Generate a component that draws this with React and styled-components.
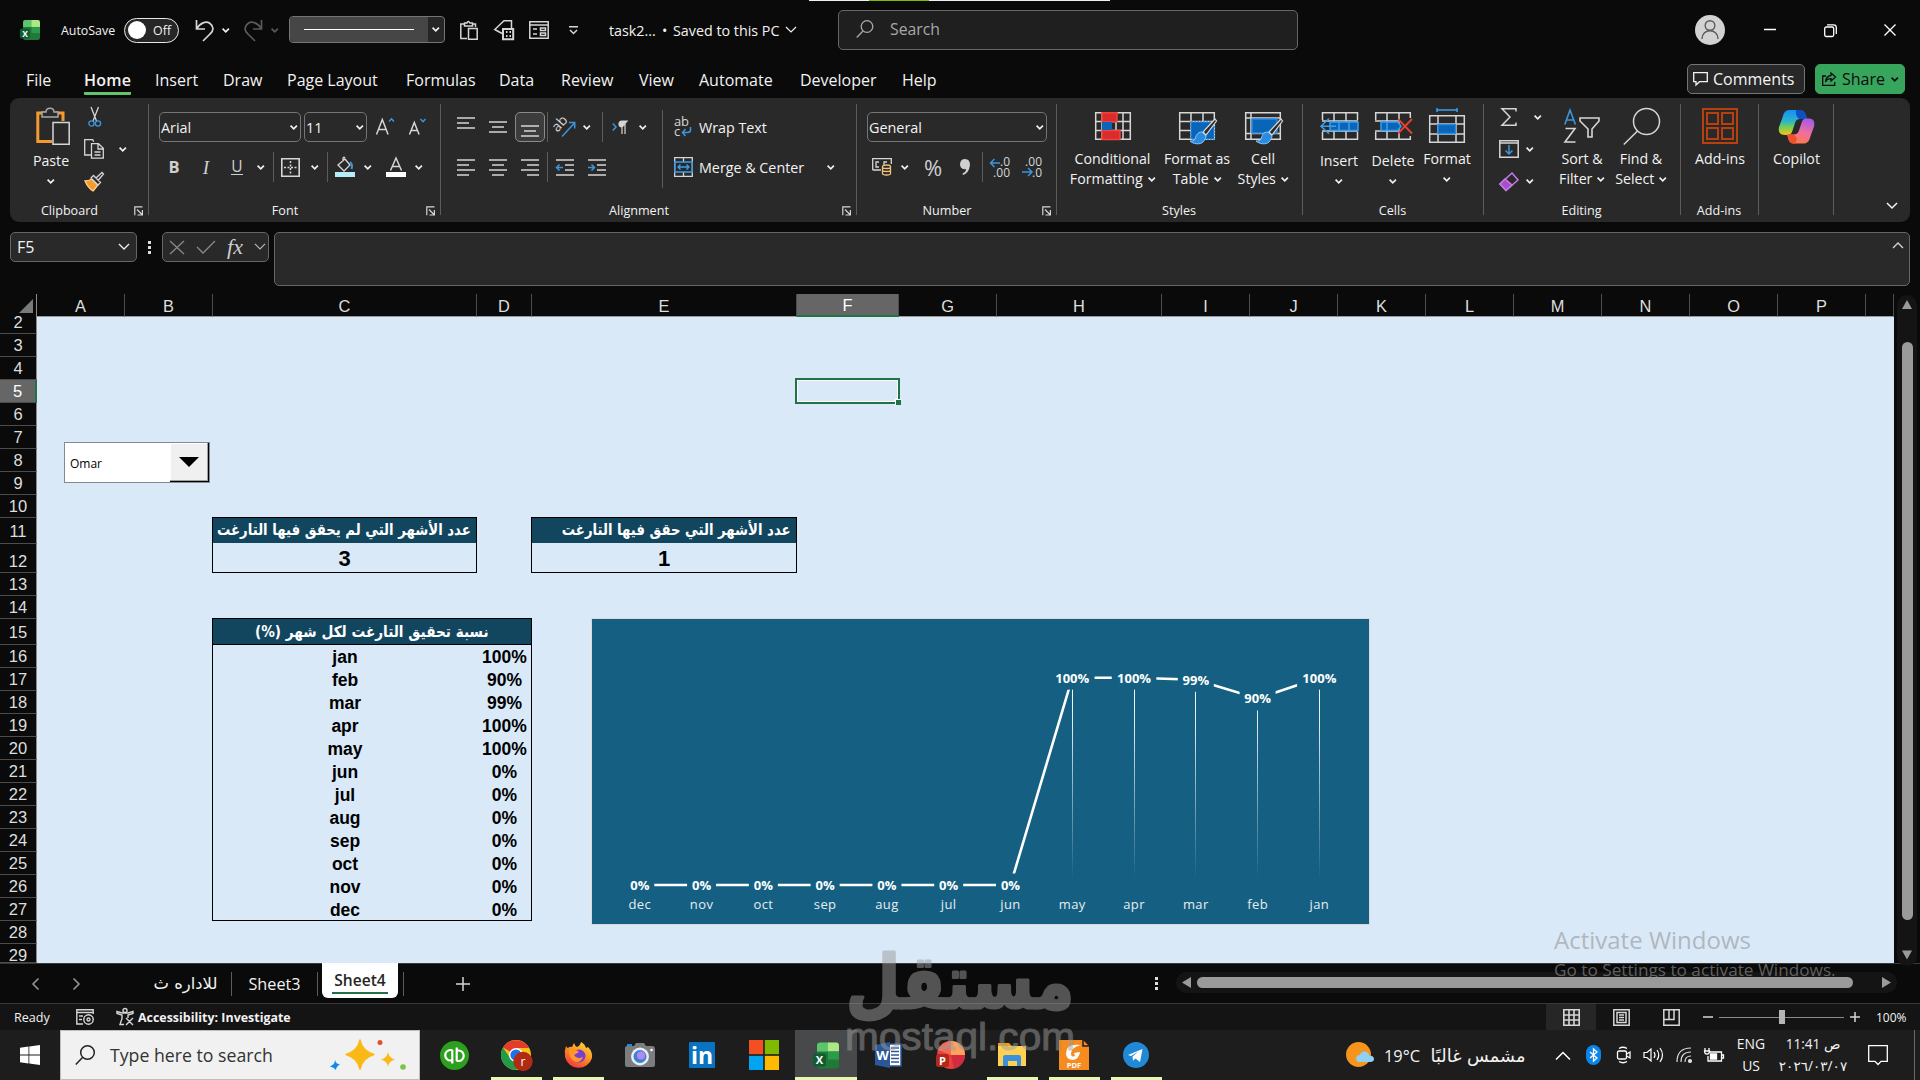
import React from 'react'
import styled, { createGlobalStyle, css } from 'styled-components'

const UI = '"Open Sans", "DejaVu Sans", sans-serif'
const CELL = '"Liberation Sans", "DejaVu Sans", Arial, sans-serif'

const GlobalStyle = createGlobalStyle`
  * {
    box-sizing: border-box;
  }
  body {
    margin: 0;
    background: #0a0a0a;
    overflow: hidden;
  }
  svg {
    display: block;
    flex: none;
    overflow: visible;
  }
`

const Page = styled.div`
  position: relative;
  display: flex;
  flex-direction: column;
  width: 1920px;
  height: 1080px;
  overflow: hidden;
  background: #0a0a0a;
  color: #f2f2f2;
  font-family: ${UI};
  font-size: 14.3px;
  white-space: nowrap;
`

/* shared bits */

const Slot = styled.div`
  flex: none;
  display: flex;
  align-items: center;
  justify-content: ${p => p.$start ? 'flex-start' : 'center'};
  width: ${p => p.$w}px;
  height: 100%;
`

const Rule = styled.i`
  flex: none;
  width: 1px;
  height: ${p => p.$h || 30}px;
  background: #5c5c5c;
`

const Svg = ({ w = 20, h = w, box, children, ...rest }) => (
  <svg width={w} height={h} viewBox={box || `0 0 ${w} ${h}`} fill="none" stroke="#d6d6d6" strokeWidth="1.5" {...rest}>
    {children}
  </svg>
)

const Chevron = ({ w = 7.5, color = '#f0f0f0', sw = 1.7 }) => (
  <Svg w={w} h={w * 0.6} box="0 0 10 6" stroke={color} strokeWidth={sw * 10 / w}><path d="M.8.8 5 5 9.2.8" /></Svg>
)

/* title bar */

const TitleBar = styled.header`
  display: flex;
  align-items: center;
  flex: none;
  height: 60px;
`

const Label = styled.span`
  flex: none;
  width: ${p => p.$w}px;
  font-size: ${p => p.$size || 14.3}px;
`

const Toggle = styled.div`
  display: flex;
  align-items: center;
  gap: 7px;
  flex: none;
  width: 55px;
  height: 25px;
  padding-left: 3px;
  border: 1px solid #e8e8e8;
  border-radius: 13px;
  background: #262626;
  font-size: 12.4px;
  &::before {
    content: '';
    width: 18px;
    height: 18px;
    border-radius: 50%;
    background: #fff;
  }
`

const LineStyleBox = styled.div`
  display: flex;
  flex: none;
  width: 156px;
  height: 27px;
  margin: -1px 11px 0 7px;
  border: 1px solid #757575;
  border-radius: 4px;
  background: #262626;
  overflow: hidden;
`

const LineStyle = styled.div`
  display: flex;
  align-items: center;
  justify-content: center;
  width: 138px;
  background: #464646;
  &::before {
    content: '';
    width: 110px;
    height: 1px;
    background: #fff;
  }
`

const SearchBox = styled.div`
  display: flex;
  align-items: center;
  flex: none;
  width: 460px;
  height: 40px;
  padding: 0 0 2px 17px;
  gap: 16px;
  border: 1px solid #666;
  border-radius: 5px;
  background: #1f1f1f;
  color: #a8a8a8;
  font-size: 15.8px;
`

const Avatar = styled.div`
  display: flex;
  align-items: center;
  justify-content: center;
  flex: none;
  width: 30px;
  height: 30px;
  margin: 0 24px 0 397px;
  border-radius: 50%;
  background: #d2d2d2;
`

const TopStrip = styled.div`
  position: absolute;
  top: 0;
  left: 809px;
  width: 301px;
  height: 1px;
  background: linear-gradient(90deg, #f0f0f0 60px, #7fba00 60px 120px, #f0f0f0 120px);
`

/* ribbon tabs */

const TabRow = styled.nav`
  display: flex;
  flex: none;
  height: 38px;
  padding-left: 26px;
  font-size: 16px;
  line-height: 41px;
`

const Tab = styled.div`
  flex: none;
  width: ${p => p.$w}px;
  ${p => p.$active && css`
    font-weight: 600;
    & span {
      display: inline-block;
      height: 35px;
      border-bottom: 3px solid #62c46c;
      border-radius: 1px;
      letter-spacing: 0.2px;
    }
  `}
`

const ActionButton = styled.div`
  display: flex;
  align-items: center;
  flex: none;
  gap: ${p => p.$share ? 6 : 5}px;
  width: ${p => p.$share ? 90 : 118}px;
  height: 30px;
  margin: 4px 10px 0 0;
  padding-left: ${p => p.$share ? 6 : 5}px;
  border: 1px solid ${p => p.$share ? '#37a55c' : '#747474'};
  border-radius: 5px;
  background: ${p => p.$share ? '#37a55c' : '#282828'};
  color: ${p => p.$share ? '#0d0d0d' : '#f5f5f5'};
  line-height: 28px;
`

/* ribbon */

const Ribbon = styled.section`
  display: flex;
  flex: none;
  height: 124px;
  margin: 0 10px;
  border-radius: 9px;
  background: #292929;
`

const Group = styled.div`
  display: flex;
  flex-direction: column;
  flex: none;
  width: ${p => p.$w}px;
  height: 124px;
  padding-left: ${p => p.$pad || 0}px;
  background: linear-gradient(#5c5c5c, #5c5c5c) right 6px / 1px 111px no-repeat;
`

const GroupBody = styled.div`
  display: flex;
  flex: none;
  height: 102px;
`

const GroupFooter = styled.div`
  display: flex;
  align-items: center;
  height: 20px;
  margin-left: -${p => p.$pad || 0}px;
  padding-right: 2px;
  font-size: 12.6px;
  & > span {
    flex: 1;
    text-align: center;
  }
  & > svg {
    margin: 1px 4px 0 5px;
  }
`

const Rows = styled.div`
  display: flex;
  flex-direction: column;
  gap: ${p => p.$tight ? 0 : 10}px;
  padding-top: ${p => p.$tight ? 3 : 14}px;
`

const Row = styled.div`
  display: flex;
  align-items: center;
  height: ${p => p.$h || 30}px;
`

const BigButton = styled.div`
  display: flex;
  flex-direction: column;
  align-items: center;
  flex: none;
  width: ${p => p.$w}px;
  font-size: 14.2px;
  line-height: 20px;
  text-align: center;
  & small {
    display: flex;
    align-items: center;
    gap: 5px;
    height: 20px;
    font-size: 14.2px;
  }
`

const BigIcon = styled.div`
  display: flex;
  align-items: center;
  justify-content: center;
  height: 51px;
  padding-top: 5px;
  margin-bottom: ${p => p.$drop || 0}px;
`

const Select = styled.div`
  display: flex;
  align-items: center;
  justify-content: space-between;
  flex: none;
  width: ${p => p.$w}px;
  height: 30px;
  margin-right: 3px;
  padding: 0 3px 0 1px;
  border: 1px solid #757575;
  border-radius: 5px;
  font-size: 14.4px;
`

const Pressed = styled.div`
  display: flex;
  align-items: center;
  justify-content: center;
  width: 30px;
  height: 30px;
  padding-top: 8px;
  border: 1px solid #8a8a8a;
  border-radius: 5px;
  background: #3c3c3c;
`

const Glyph = styled.span`
  color: #cfcfcf;
  font-family: ${p => p.$serif ? '"Liberation Serif", serif' : UI};
  font-size: ${p => p.$size || 17}px;
  font-style: ${p => p.$italic ? 'italic' : 'normal'};
  font-weight: ${p => p.$bold ? 700 : 400};
  line-height: 1;
  ${p => p.$under && 'border-bottom: 1.5px solid #cfcfcf;'}
`

const Collapse = styled.div`
  display: flex;
  align-items: flex-end;
  justify-content: flex-end;
  flex: 1;
  padding: 0 12px 13px 0;
`

const Launcher = () => (
  <Svg w={9} h={10} strokeWidth="1.2"><path d="M8.5.8H.8v8.4M3 3.5l5 5M8.4 4v5H3.5" /></Svg>
)

const Lines = ({ w = [18, 12, 18, 12], align = 'left', h }) => (
  <Svg w={18} h={h || w.length * 5 - 3} strokeWidth="1.5">
    {w.map((len, i) => {
      const x = align === 'left' ? 0 : align === 'right' ? 18 - len : (18 - len) / 2
      return <path key={i} d={`M${x} ${1 + i * 5}h${len}`} />
    })}
  </Svg>
)

const Brush = () => (
  <g>
    <path d="M36 10 24 23l3 3L37.500 12Z" fill="#292929" stroke="#d6d6d6" strokeWidth="1.2" />
    <path d="M23 23c-5 0-6 4-7 7-1 2-3 2-5 2 3 3 10 4 13 1 2-2 3-5 3-6Z" fill="#2b8be0" stroke="#8cc8ff" strokeWidth="1" />
  </g>
)

const CondFormatIcon = () => (
  <Svg w={36} h={28}>
    <path d="M.7.7h34.600v26.600H.7ZM7 0v28M21 0v28M28 0v28M0 9.500h36M0 18.500h36" />
    <path d="M7 .7h15v9H7ZM7 18.500h18v9H7Z" fill="#d92c2c" stroke="#f0443a" />
    <path d="M7 10h10v8H7Z" fill="#0a64b8" stroke="none" />
  </Svg>
)

const FormatTableIcon = () => (
  <Svg w={37} h={34}>
    <path d="M.7 3.700h34.600v26.600H.7ZM12 3v28M24 3v28M0 12.500h36M0 21.500h36" />
    <path d="M12 13h23v17H12Z" fill="#0a64b8" stroke="#2b8be0" strokeDasharray="2 1" />
    <Brush />
  </Svg>
)

const CellStylesIcon = () => (
  <Svg w={37} h={34}>
    <path d="M.7 3.700h34.600v26.600H.7ZM6 3v28M0 9h36M0 24.500h36" />
    <path d="M7 10h25v14H7Z" fill="#0a64b8" stroke="#2b8be0" />
    <Brush />
  </Svg>
)

const InsertIcon = () => (
  <Svg w={39} h={28}>
    <path d="M2.500 8V.7h35V8M2.500 20v7.300h35V20M14 .7V28M26 .7V28M2 9h36M2 19h36" />
    <path d="M10 10h28v8.500H10Z" fill="#0a64b8" stroke="#3a9ff0" />
    <path d="M19 10v8M29 10v8M16 14.200H1M9 6.500 1 14.200l8 7.600" stroke="#3a9ff0" />
  </Svg>
)

const DeleteIcon = () => (
  <Svg w={37} h={28}>
    <path d="M.7 8V.7h34.600V6M.7 20v7.300h34.600V24M12 .7V28M24 .7V28M0 9h24M0 19h24" />
    <path d="M6 10h17l3 4.200-3 4.300H6Z" fill="#0a64b8" stroke="#3a9ff0" />
    <path d="M12 10v8" stroke="#3a9ff0" />
    <path d="m23 7 14 14.500M37 7 23 21.500" stroke="#e8402f" strokeWidth="1.8" />
  </Svg>
)

const FormatIcon = () => (
  <Svg w={36} h={36}>
    <path d="M.7 7.700h34.600v26.600H.7ZM9 7v28M27 7v28M0 16h36M0 26h36" />
    <path d="M9 16.500h17.500v9H9Z" fill="#0a64b8" stroke="#2b8be0" />
    <path d="M8 0v4M28 0v4M8 2h20" stroke="#3a9ff0" />
  </Svg>
)

const SortIcon = () => (
  <Svg w={36} h={34} strokeWidth="1.600">
    <path d="M.8 15.500 6 1l5.400 14.500M2.500 11h7" stroke="#3a96dd" />
    <path d="M1.500 19.500h9.500L1 33h10.500M16 9h19v3l-7 8v8h-4v-8l-8-8Z" />
  </Svg>
)

const FindIcon = () => (
  <Svg w={37} h={37}><circle cx="23.500" cy="13.500" r="13" /><path d="M14.500 23 .8 36.500" /></Svg>
)

const AddinsIcon = () => (
  <Svg w={36} h={36} stroke="#b8400f" strokeWidth="2">
    <path d="M1 1h34v34H1ZM5 5h11v11H5ZM20 5h11v11H20ZM5 20h11v11H5ZM20 20h11v11H20Z" />
  </Svg>
)

const CopilotIcon = () => (
  <Svg w={37} h={35} box="0 0 37 35" stroke="none">
    <defs>
      <linearGradient id="cpA" x1="0" y1="0" x2="0" y2="1">
        <stop offset="0" stopColor="#1a8df5" /><stop offset=".45" stopColor="#2bb5c9" />
        <stop offset=".7" stopColor="#7ccf4f" /><stop offset="1" stopColor="#f5c518" />
      </linearGradient>
      <linearGradient id="cpB" x1=".6" y1="0" x2=".3" y2="1">
        <stop offset="0" stopColor="#a85be8" /><stop offset=".5" stopColor="#ee6fa0" /><stop offset="1" stopColor="#ff7a45" />
      </linearGradient>
    </defs>
    <path d="M20 1c5 0 7 2 8 6l1 3h-7c-3 0-4 1-5 4l-3 9c-1 2-2 3-4 3H7c-5 0-7-3-6-8L5 7c1-4 3-6 7-6Z" fill="url(#cpA)" />
    <path d="M18 1h3c4 0 6 2 7 6l1 3h-6c-3 0-4-2-5-5Z" fill="#0b50c4" />
    <path d="M17 34.500c-5 0-6-2-7-6l-1-3h6c3 0 5-1 6-4l3-9c1-2 2-3 4-3h3c5 0 6 4 5 8l-4 11c-1 4-3 6-7 6Z" fill="url(#cpB)" />
    <path d="M17 34.500c-5 0-6-2-7-6l-1-3h5c3 0 4 2 5 5Z" fill="#f0502a" />
  </Svg>
)

const PasteIcon = () => (
  <Svg w={30} h={38}>
    <path d="M10 6H1.800v28.500H16M20 6h7v8" stroke="#f59a2f" strokeWidth="3" />
    <path d="M6 10V5h4c0-5 8-5 8 0h4v5Z" fill="#292929" stroke="#a9a9a9" />
    <path d="M17 15.500h16.200v21.700H17Z" fill="#292929" />
  </Svg>
)

const CutIcon = () => (
  <Svg w={13} h={20} strokeWidth="1.300">
    <path d="m3 0 5.500 14M10.500 0 5 14" />
    <circle cx="3.500" cy="16.500" r="2.600" stroke="#3a96dd" /><circle cx="10" cy="16.500" r="2.600" stroke="#3a96dd" />
  </Svg>
)

const CopyIcon = () => (
  <Svg w={20} h={20} strokeWidth="1.300">
    <path d="M7 16H.7V.7h8l1 2M7.500 4.700h7l4.800 4.500v10H7.500ZM14 5v5h5M10.500 13h6M10.500 16h6" />
  </Svg>
)

const PainterIcon = () => (
  <Svg w={20} h={19} strokeWidth="1.300">
    <path d="M1 9c3 0 5-1 7-2l6 6c-2 2-3 4-5 6Q4 16 1 9Z" fill="#f59a2f" stroke="#ffd08a" />
    <path d="m7 6 2.500-2.500 7 7L14 13ZM12 6l6-5.500L19.500 2 14 8.500" fill="#292929" />
  </Svg>
)

const MergeIcon = () => (
  <Svg w={19} h={20} strokeWidth="1.300">
    <path d="M.7.7h17.600v18.600H.7ZM9.500 0v5M9.500 15v5" />
    <path d="M.7 5h17.600v10H.7ZM4 10h11M6.500 7.500 4 10l2.500 2.500M12.500 7.500 15 10l-2.500 2.500" stroke="#3a9ff0" />
  </Svg>
)

const WrapIcon = () => (
  <Svg w={18} h={20}>
    <text x="0" y="8.500" fontSize="13" textLength="15" fill="#d6d6d6" stroke="none" fontFamily={UI}>ab</text>
    <text x="0" y="19" fontSize="13" fill="#d6d6d6" stroke="none" fontFamily={UI}>c</text>
    <path d="M16.500 10v3q0 2.500-3 2.500H8.500M11.500 12l-3 3.500 3 3.500" stroke="#3a96dd" />
  </Svg>
)

const OrientIcon = () => (
  <Svg w={20} h={20}>
    <text x="-1" y="12" fontSize="14" fill="#d6d6d6" stroke="none" fontFamily={UI} transform="rotate(-48 5 10)">ab</text>
    <path d="M7 19.500 19.500 6M14 5.500h5.700v6" stroke="#3a96dd" />
  </Svg>
)

const AccountingIcon = () => (
  <Svg w={20} h={18} strokeWidth="1.300">
    <path d="M.7 12V.7h18.600V6M.7 12H9M7 4H4v5h3M12 9V4h3" />
    <path d="M10.500 8.500c0-2 8-2 8 0v7c0 2-8 2-8 0ZM10.500 9c0 2 8 2 8 0M10.500 12c0 2 8 2 8 0" fill="#292929" stroke="#f2c27a" />
  </Svg>
)

const DecimalIcon = ({ more }) => (
  <Svg w={20} h={20}>
    <g fontSize="12" fill="#d6d6d6" stroke="none" fontFamily={UI}>
      <text x={more ? 10 : 3} y="8.800" textLength={more ? 10 : 17}>{more ? '.0' : '.00'}</text>
      <text x={more ? 3 : 10} y="19.500" textLength={more ? 17 : 10}>{more ? '.00' : '.0'}</text>
    </g>
    <path d={more ? 'M10 6H.5M4.500 2 .5 6l4 4' : 'M0 15h10M6 11l4 4-4 4'} stroke="#3a96dd" />
  </Svg>
)

const IndentIcon = ({ out }) => (
  <Svg w={18} h={17}>
    <path d="M0 1h18M9 6h9M9 11h9M0 16h18" />
    <path d={out ? 'M7 8.500H.5M3.500 5.500l-3 3 3 3' : 'M0 8.500h6.500M3.500 5.500l3 3-3 3'} stroke="#3a96dd" />
  </Svg>
)

const BordersIcon = () => (
  <Svg w={19} h={19}><path d="M.8.8h17.400v17.400H.8Z" strokeWidth="1.6" /><path d="M9.500 3v13M3 9.500h13" strokeDasharray="2 1.500" /></Svg>
)

const BucketIcon = () => (
  <Svg w={20} h={20} strokeWidth="1.300">
    <path d="m3 8 7-6 5 6-6 6ZM8 5V1q1-1.500 2 0" />
    <path d="M15 5q3 2 1.500 7" stroke="#3a96dd" strokeWidth="2" />
    <path d="M0 15h20v5H0Z" fill="#b5ecfb" stroke="none" />
  </Svg>
)

const FontColorIcon = () => (
  <Svg w={20} h={20}><path d="M4.500 13.500 10 1l5.500 12.500M6.500 9.500h7" /><path d="M0 15h20v5H0Z" fill="#fff" stroke="none" /></Svg>
)

const FontSizeIcon = ({ up }) => (
  <Svg w={18} h={18}>
    {up
      ? <path d="M.5 16.500 6.300 1.500l5.800 15M2.500 11.500h7.600" />
      : <path d="M.5 16.500 5.300 4.500l4.800 12M2 12.500h6.500" />}
    <path d={up ? 'm13 3.500 2.500-2.700L18 3.500' : 'm11.500 1 2.500 2.700L16.500 1'} stroke="#3a96dd" />
  </Svg>
)

/* formula bar */

const FormulaBar = styled.section`
  display: flex;
  flex: none;
  height: 72px;
  padding: 10px 0 0 10px;
`

const Field = styled.div`
  display: flex;
  align-items: center;
  justify-content: space-between;
  flex: none;
  width: ${p => p.$w}px;
  height: ${p => p.$h || 30}px;
  padding: 0 ${p => p.$r || 6}px 0 6px;
  border: 1px solid #666;
  border-radius: 5px;
  background: #292929;
  font-size: 16px;
`

const FormulaInput = styled(Field)`
  align-items: flex-start;
  justify-content: flex-end;
  margin-left: 5px;
  padding: 9px 5px;
`

const Dots = styled.div`
  flex: none;
  width: 25px;
  height: ${p => p.$h || 30}px;
  background: linear-gradient(#ddd 3px, transparent 3px 5px, #ddd 5px 8px, transparent 8px 10px, #ddd 10px) center / 3px 13px no-repeat;
`

/* worksheet */

const SheetArea = styled.main`
  position: relative;
  display: flex;
  flex: none;
  height: 669px;
`

const rowHeights = [17, 23, 23, 23, 23, 23, 23, 23, 23, 26, 29, 23, 23, 26, ...Array(12).fill(23), 23, 19]

const Sheet = styled.div`
  display: grid;
  flex: none;
  width: 1894px;
  grid-template-columns: 37px 88px 88px 264px 55px 265px 102px 98px 165px repeat(8, 88px) 28px;
  grid-template-rows: 23px ${rowHeights.map(h => h + 'px').join(' ')};
  background: linear-gradient(#d9e9f8, #d9e9f8) 37px 23px no-repeat;
  font-family: ${CELL};
`

const Corner = styled.div`
  grid-area: 1 / 1;
  display: flex;
  align-items: flex-end;
  justify-content: flex-end;
  padding: 0 3px 4px 0;
  border-right: 1px solid #8a8a8a;
`

const ColHead = styled.div`
  grid-row: 1;
  display: flex;
  align-items: center;
  justify-content: center;
  padding-top: 2px;
  border-right: 1px solid #4c4c4c;
  border-bottom: 1px solid #9a9a9a;
  font-size: 16.4px;
  color: #dedede;
  ${p => p.$active && css`
    background: #666;
    border-bottom: 2px solid #217346;
    color: #fff;
  `}
`

const RowHead = styled.div`
  grid-column: 1;
  display: flex;
  align-items: ${p => p.$edge || 'center'};
  justify-content: center;
  border-right: 1px solid #8a8a8a;
  border-bottom: 1px solid #4c4c4c;
  font-size: 16.5px;
  line-height: 22px;
  color: #dedede;
  ${p => p.$active && css`
    background: #666;
    border-right: 2px solid #217346;
    color: #fff;
  `}
`

const Selection = styled.div`
  grid-area: 5 / 7;
  position: relative;
  margin: -2px -1px -1px -2px;
  border: 2px solid #217346;
  box-shadow: inset 0 0 0 1px #fff;
  &::after {
    content: '';
    position: absolute;
    right: -3px;
    bottom: -3px;
    width: 5px;
    height: 5px;
    border: solid #fff;
    border-width: 1px 0 0 1px;
    background: #217346;
  }
`

const Counter = styled.div`
  grid-row: 11 / span 2;
  grid-column: ${p => p.$col};
  display: flex;
  flex-direction: column;
  margin: -1px 0 0 -1px;
  border: 1px solid #000;
  color: #000;
  font-size: 22px;
  font-weight: 700;
  line-height: 32px;
  text-align: center;
`

const ArabicHead = styled.div`
  flex: none;
  height: ${p => p.$h}px;
  padding: 0 5px;
  background: #12465f;
  color: #fff;
  font-family: "DejaVu Sans", sans-serif;
  font-size: 15.5px;
  font-weight: 700;
  line-height: ${p => p.$h}px;
  text-align: ${p => p.$center ? 'center' : 'right'};
  direction: rtl;
  & span {
    display: inline-block;
    transform: scaleX(${p => p.$center ? 0.88 : 0.855});
    transform-origin: ${p => p.$center ? 'center' : 'right'};
  }
`

const MonthTable = styled.div`
  grid-row: 15 / span 13;
  grid-column: 4 / span 2;
  margin: -1px 0 0 -1px;
  border: 1px solid #000;
  color: #000;
  font-size: 17.5px;
  font-weight: 700;
  & > ${ArabicHead} {
    border-bottom: 1px solid #000;
  }
`

const MonthRow = styled.div`
  display: grid;
  grid-template-columns: 264px 55px;
  height: 23px;
  line-height: 25px;
  text-align: center;
`

const ComboBox = styled.div`
  position: absolute;
  left: 64px;
  top: 148px;
  display: flex;
  align-items: center;
  justify-content: space-between;
  width: 146px;
  height: 41px;
  padding-left: 5px;
  border: 1px solid #848a92;
  background: #fff;
  color: #000;
  font-size: 12px;
  & > span {
    padding-top: 2px;
  }
`

const ComboArrow = styled.div`
  display: flex;
  align-items: center;
  justify-content: center;
  width: 39px;
  height: 39px;
  border: solid #000;
  border-width: 0 1px 1px 0;
  background: #f0f0f0;
  box-shadow: inset -1px -1px #a0a0a0, inset 1px 1px #fff;
  &::before {
    content: '';
    border: 10px solid transparent;
    border-top-color: #000;
    border-bottom: 0;
  }
`

const ChartFrame = styled.div`
  position: absolute;
  left: 591px;
  top: 324px;
`

const months = [
  ['jan', 100], ['feb', 90], ['mar', 99], ['apr', 100], ['may', 100], ['jun', 0],
  ['jul', 0], ['aug', 0], ['sep', 0], ['oct', 0], ['nov', 0], ['dec', 0],
]

const Chart = () => {
  const pts = [...months].reverse().map(([name, v], i) => ({
    name,
    v,
    x: 48.8 + i * 61.78,
    y: 267 - v * 2.073,
    half: v === 100 ? 22.3 : v ? 18 : 14.5,
  }))
  return (
    <ChartFrame>
      <svg width="779" height="307" fontFamily={UI} textAnchor="middle">
        <defs>
          <linearGradient id="drop" gradientUnits="userSpaceOnUse" x1="0" y1="60" x2="0" y2="262">
            <stop offset="0" stopColor="#fff" />
            <stop offset=".25" stopColor="#fff" stopOpacity=".85" />
            <stop offset="1" stopColor="#fff" stopOpacity="0" />
          </linearGradient>
        </defs>
        <rect x=".5" y=".5" width="778" height="306" fill="#156082" stroke="#d9d9d9" />
        {pts.filter(p => p.v).map(p => (
          <rect key={p.name} x={Math.floor(p.x)} y={p.y} width="1" height={262 - p.y} fill="url(#drop)" />
        ))}
        <polyline points={pts.map(p => `${p.x},${p.y}`).join(' ')} fill="none" stroke="#fff" strokeWidth="2.6" />
        {pts.map(p => (
          <g key={p.name} fill="#fff">
            <rect x={p.x - p.half} y={p.y - 11.5} width={p.half * 2} height="23.500" fill="#156082" />
            <text x={p.x} y={p.y + 5} fontSize="13" fontWeight="700">{p.v}%</text>
            <text x={p.x} y="290.500" fontSize="13" letterSpacing=".4" fill="#e6edf1">{p.name}</text>
          </g>
        ))}
      </svg>
    </ChartFrame>
  )
}

const VScroll = styled.div`
  display: flex;
  flex-direction: column;
  align-items: center;
  width: 20px;
  height: 671px;
  margin: 1px 0 0 3px;
  padding: 5px 0 6px;
  border-radius: 10px;
  background: #141414;
`

const VThumb = styled.div`
  width: 11px;
  height: 578px;
  margin: 32px 0 auto;
  border-radius: 6px;
  background: #9a9a9a;
`

/* sheet tabs + status bar */

const SheetTabs = styled.section`
  display: flex;
  flex: none;
  height: 40px;
  border-top: 1px solid #3a3a3a;
  background: #0a0a0a;
  font-size: 16.2px;
`

const ActiveSheet = styled.div`
  flex: none;
  width: 76px;
  height: 35px;
  margin: -1px 5px 0 4px;
  padding: 7px 10px 0;
  border-radius: 0 0 6px 6px;
  background: #fff;
  color: #262626;
  font-size: 15.6px;
  font-weight: 600;
  line-height: 23px;
  text-align: center;
  & span {
    display: block;
    border-bottom: 2px solid #217346;
    margin: -1px 0;
  }
`

const ArabicTab = styled.span`
  font-family: "DejaVu Sans", sans-serif;
  font-size: ${p => p.$size || 16.4}px;
`

const HScroll = styled.div`
  display: flex;
  align-items: center;
  flex: none;
  width: 721px;
  height: 21px;
  margin: 8px 0 0 7px;
  padding: 0 6px;
  border-radius: 10px;
  background: #141414;
`

const HThumb = styled.div`
  width: 656px;
  height: 11px;
  margin: 0 auto 0 6px;
  border-radius: 6px;
  background: #9a9a9a;
`

const StatusBar = styled.footer`
  display: flex;
  align-items: center;
  flex: none;
  height: 27px;
  padding-left: 14px;
  border-top: 1px solid #3a3a3a;
  background: #141414;
  font-size: 12.4px;
  & b {
    width: 1256px;
    font-size: 12.4px;
    letter-spacing: 0.02px;
  }
`

const ViewButton = styled(Slot)`
  height: 27px;
  background: ${p => p.$active ? '#262626' : 'none'};
`

const ZoomTrack = styled.div`
  display: flex;
  align-items: center;
  justify-content: center;
  width: 125px;
  height: 14px;
  background: linear-gradient(#8a8a8a, #8a8a8a) center / 100% 1px no-repeat;
  &::before {
    content: '';
    width: 6px;
    height: 14px;
    background: #b5b5b5;
  }
`

/* taskbar */

const Taskbar = styled.footer`
  display: flex;
  flex: none;
  height: 50px;
  background: #1d1d1d;
`

const TaskSearch = styled.div`
  display: flex;
  align-items: center;
  flex: none;
  width: 360px;
  margin-right: 3px;
  padding: 0 13px 0 14px;
  gap: 15px;
  background: #f1f1f1;
  border: 1px solid #bdbdbd;
  color: #333;
  font-size: 17.7px;
  & > svg:last-child {
    margin-left: auto;
  }
`

const AppButton = styled.div`
  display: flex;
  align-items: center;
  justify-content: center;
  flex: none;
  width: 62px;
  height: 50px;
  ${p => p.$open && css`
    background: linear-gradient(#e6f7b4, #e6f7b4) bottom / 51px 3px no-repeat;
  `}
  ${p => p.$active && css`
    background: linear-gradient(#e6f7b4, #e6f7b4) bottom / 100% 3px no-repeat #48494b;
  `}
`

const TrayText = styled.div`
  flex: none;
  width: ${p => p.$w}px;
  padding-top: 3px;
  font-size: ${p => p.$size || 13.6}px;
  line-height: 22px;
  text-align: center;
`

const ShowDesktop = styled.i`
  width: 1px;
  margin-left: auto;
  margin-right: 5px;
  background: #6a6a6a;
`

const ExcelLogo = ({ w = 20, h = w }) => (
  <Svg w={w} h={h} box="0 0 26 26" stroke="none">
    <rect x="4" width="22" height="26" rx="3" fill="#1f7a3a" />
    <path d="M7 0h9v9H4V3q0-3 3-3Z" fill="#5cc46a" />
    <path d="M15 0h8q3 0 3 3v6H15Z" fill="#aee884" />
    <path d="M15 9h11v8H15Z" fill="#2a9b46" />
    <rect y="11" width="13" height="13" rx="2.500" fill="#115c31" />
    <text x="6.500" y="21.500" fontSize="11" fontWeight="700" fill="#fff" textAnchor="middle" fontFamily={UI}>X</text>
  </Svg>
)

const taskApps = [
  { icon: (
    <Svg w={29} stroke="none"><circle cx="14.500" cy="14.500" r="14.500" fill="#2ca01c" />
      <path d="M12.500 9h-2a5 5 0 0 0 0 10.500h.8M16.500 20h2a5 5 0 0 0 0-10.500h-.8M12.300 9v13.500M16.700 6.500V20" stroke="#fff" strokeWidth="2.200" />
    </Svg>
  ) },
  { open: true, icon: (
    <Svg w={30} stroke="none">
      <circle cx="15" cy="15" r="15" fill="#fbc116" />
      <path d="M15 15 2 7.500A15 15 0 0 1 28 8H15Z" fill="#e33b2e" />
      <path d="M2 7.500A15 15 0 0 0 15 30l6-11-6-1-6.500-1Z" fill="#229a49" />
      <circle cx="15" cy="15" r="7" fill="#fff" /><circle cx="15" cy="15" r="5.600" fill="#1a73e8" />
      <circle cx="22" cy="21.500" r="9.700" fill="#b02a14" />
      <text x="22" y="25.500" fontSize="12" fill="#fff" textAnchor="middle" fontFamily={UI}>r</text>
    </Svg>
  ) },
  { open: true, icon: (
    <Svg w={29} stroke="none">
      <defs><linearGradient id="ff" x1=".8" y1="0" x2=".2" y2="1"><stop offset="0" stopColor="#ffd83d" /><stop offset=".5" stopColor="#ff8a1f" /><stop offset="1" stopColor="#ee2d4a" /></linearGradient></defs>
      <path d="M2 5q1 2 2 2 2-2 4-1l2-4q1 3 3 4 3-1 4-5 4 2 5 6l2-1q5 5 4 11A14 14 0 0 1 1 16Q0 10 2 5Z" fill="url(#ff)" />
      <circle cx="15" cy="15" r="6.500" fill="#7a3fd0" />
      <path d="M5 9q6-2 10 2l-5 3q3 5 9 2-3 7-9 4-5-3-5-11Z" fill="#ff9a2a" />
    </Svg>
  ) },
  { icon: (
    <Svg w={30} h={25} stroke="none">
      <path d="M9 3 11 0h8l2 3h6q3 0 3 3v16q0 2-2 2H2q-2 0-2-2V5q0-2 2-2Z" fill="#7b7d80" />
      <path d="M2 3V1h5v2Z" fill="#1b8be0" /><circle cx="15" cy="13.500" r="9" fill="#e9eef2" />
      <circle cx="15" cy="13.500" r="6.500" fill="#3f7fd6" /><circle cx="16" cy="12.500" r="4" fill="#b18cf0" /><circle cx="26.500" cy="7" r="1.300" fill="#fff" />
    </Svg>
  ) },
  { icon: (
    <Svg w={26} stroke="none"><rect width="26" height="26" rx="1" fill="#0a72c2" />
      <text x="13" y="22" fontSize="23" fontWeight="700" fill="#fff" textAnchor="middle" fontFamily={UI}>in</text>
    </Svg>
  ) },
  { icon: (
    <Svg w={30} stroke="none"><path d="M0 0h14.200v14.200H0Z" fill="#f25022" /><path d="M15.800 0H30v14.200H15.800Z" fill="#7fba00" /><path d="M0 15.800h14.200V30H0Z" fill="#00a4ef" /><path d="M15.800 15.800H30V30H15.800Z" fill="#ffb900" /></Svg>
  ) },
  { active: true, icon: <ExcelLogo w={26} h={27} /> },
  { icon: (
    <Svg w={27} h={26} stroke="none"><path d="M13 2h13v22H13Z" fill="#fff" stroke="#2b5797" />
      <path d="M16 6h8M16 9.500h8M16 13h8M16 16.500h8M16 20h8" stroke="#2b5797" strokeWidth="1.500" />
      <path d="M0 3 15 0v26L0 23Z" fill="#2b5797" />
      <text x="7.500" y="18" fontSize="13" fontWeight="700" fill="#fff" textAnchor="middle" fontFamily={UI}>W</text>
    </Svg>
  ) },
  { icon: (
    <Svg w={29} h={28} stroke="none"><circle cx="15" cy="14" r="14" fill="#e8413b" />
      <path d="M15 0a14 14 0 0 1 14 14H15Z" fill="#ffa35c" /><path d="M15 0a14 14 0 0 0-13 9l13 5Z" fill="#f46b5a" />
      <path d="m15 14 14 0a14 14 0 0 1-11 13.600Z" fill="#d12b3f" />
      <rect y="13" width="13" height="13" rx="2.500" fill="#b3281a" />
      <text x="6.500" y="23.500" fontSize="11" fontWeight="700" fill="#fff" textAnchor="middle" fontFamily={UI}>P</text>
    </Svg>
  ) },
  { open: true, icon: (
    <Svg w={28} h={24} stroke="none"><path d="M0 0h11l3 3h-3v3H0Z" fill="#e8a013" /><path d="M0 3h28v20H0Z" fill="#ffd152" />
      <path d="M5 23v-9q0-2 2-2h14q2 0 2 2v9h-4v-5h-9v5Z" fill="#3a90dc" />
    </Svg>
  ) },
  { open: true, icon: (
    <Svg w={30} stroke="none"><path d="M0 0h24l6 6v24H0Z" fill="#f68b1f" /><path d="M24 0v6h6" stroke="#1d1d1d" />
      <path d="M22 5q-15-2-15 8 0 7 7 7 6-1 7-8l-6 1 1 3q-4 2-4-3 1-6 10-8Z" fill="#fff" />
      <text x="15" y="28" fontSize="7.500" fontWeight="700" fill="#fff" textAnchor="middle" fontFamily={UI}>PDF</text>
    </Svg>
  ) },
  { open: true, icon: (
    <Svg w={26} stroke="none"><circle cx="13" cy="13" r="13" fill="#2089d8" /><path d="m5 13 14.500-6-2.500 13-4.500-3.500-2.500 2.300-.5-4.300 6-5-7.500 4.500Z" fill="#fff" /></Svg>
  ) },
]

/* overlays */

const ActivateNotice = styled.div`
  position: absolute;
  left: 1554px;
  top: 923px;
  color: rgba(150, 150, 150, 0.62);
  font-size: 24px;
  line-height: 33px;
  & p {
    margin: 0;
    font-size: 17.2px;
    line-height: 27px;
  }
`

const Watermark = styled.div`
  position: absolute;
  left: 845px;
  top: 945px;
  opacity: 0.5;
`

const tabs = [
  ['File', 58], ['Home', 71], ['Insert', 68], ['Draw', 64], ['Page Layout', 119], ['Formulas', 93],
  ['Data', 62], ['Review', 78], ['View', 60], ['Automate', 101], ['Developer', 102], ['Help', 785],
]

const RibbonGroup = ({ w, pad, label, launcher, children }) => (
  <Group $w={w} $pad={pad}>
    <GroupBody>{children}</GroupBody>
    <GroupFooter $pad={pad}>
      <span>{label}</span>
      {launcher && <Launcher />}
    </GroupFooter>
  </Group>
)

const Big = ({ w, icon, top, bottom, chevron, drop }) => (
  <BigButton $w={w}>
    <BigIcon $drop={drop}>{icon}</BigIcon>
    {top}
    {(bottom || chevron) && <small>{bottom}{chevron && <Chevron />}</small>}
  </BigButton>
)

const App = () => {
  return (
    <Page>
      <GlobalStyle />
      <TitleBar>
        <Slot $w={59}><ExcelLogo /></Slot>
        <Slot $w={2} />
        <Label $w={63} $size={12.4}>AutoSave</Label>
        <Toggle>Off</Toggle>
        <Slot $w={15} />
        <Slot $w={20}><Svg w={19} h={21} strokeWidth="1.7"><path d="M1.500 0v9h8.500M1.500 9C5 3 11 .5 15 3.500s4 7 0 10.500l-7 7" /></Svg></Slot>
        <Slot $w={24}><Chevron /></Slot>
        <Slot $w={30}><Svg w={19} h={21} stroke="#5a5a5a" strokeWidth="1.7"><path d="M17.500 0v9H9M17.500 9C14 3 8 .5 4 3.500s-4 7 0 10.500l7 7" /></Svg></Slot>
        <Slot $w={14}><Chevron color="#5a5a5a" /></Slot>
        <LineStyleBox>
          <LineStyle />
          <Slot $w={16}><Chevron /></Slot>
        </LineStyleBox>
        <Slot $w={26}><Svg w={18} h={20}><path d="M7 18.500H.8V4H5M12 4h3.500v3M4.500 6V3h2.500q1-3 3 0h2.500v3ZM8.500 8.500h8.700v10.700H8.500Z" /></Svg></Slot>
        <Slot $w={44}><Svg w={20} h={20}><path d="M8 13.500.8 9.500 10 .8h7.500V8" /><path d="M9 9h10.200v10.200H9ZM12 12h1.500M15.500 12H17M12 16h1.500M15.500 16H17" strokeWidth="2" /></Svg></Slot>
        <Slot $w={26}><Svg w={20} h={18}><path d="M.8.8h18.400v16.400H.8ZM0 4h20M4 8h4M4 13h4M11.500 7h5v2.500h-5ZM11.500 12h5v2.500h-5Z" /></Svg></Slot>
        <Slot $w={43}><Svg w={9} h={9}><path d="M0 .8h9M1 4l3.500 3.500L8 4" /></Svg></Slot>
        <Slot $w={14} />
        <Label $w={53}>task2...</Label>
        <Label $w={11}>•</Label>
        <Label $w={112}>Saved to this PC</Label>
        <Slot $w={53} $start><Chevron w={12} sw={1.2} /></Slot>
        <SearchBox>
          <Svg w={18} h={18} stroke="#a8a8a8" strokeWidth="1.3"><circle cx="11" cy="6.500" r="5.800" /><path d="M7 11 .8 17.500" /></Svg>
          Search
        </SearchBox>
        <Avatar>
          <Svg w={18} h={20} stroke="#5a5a5a" strokeWidth="1.4"><circle cx="9" cy="5.500" r="4.800" /><path d="M1 19c0-11 16-11 16 0" /></Svg>
        </Avatar>
        <Slot $w={42}><Svg w={12} h={2} stroke="#fff"><path d="M0 .5h12" /></Svg></Slot>
        <Slot $w={78}><Svg w={13} h={13} stroke="#fff" strokeWidth="1.3"><rect x=".7" y="3" width="9" height="9.500" rx="1.500" /><path d="M3 .8h6.500q2.800 0 2.800 2.800v6.500" /></Svg></Slot>
        <Slot $w={42}><Svg w={12} h={12} stroke="#fff" strokeWidth="1.4"><path d="m.5.5 11 11M11.500.5l-11 11" /></Svg></Slot>
      </TitleBar>
      <TopStrip />

      <TabRow>
        {tabs.map(([name, w]) => <Tab key={name} $w={w} $active={name === 'Home'}><span>{name}</span></Tab>)}
        <ActionButton>
          <Svg w={15} h={14} stroke="#f5f5f5" strokeWidth="1.3"><path d="M.7.7h13.600v9H6.500L3 13V9.700H.7Z" /></Svg>
          Comments
        </ActionButton>
        <ActionButton $share>
          <Svg w={14} h={14} stroke="#0d0d0d" strokeWidth="1.3"><path d="M4 4H.7v9.300h12V10M9 1l4.500 4L9 9V6.700Q5 6.500 3.500 10 4 4 9 3.500Z" /></Svg>
          Share
          <Chevron color="#0d0d0d" />
        </ActionButton>
      </TabRow>

      <Ribbon>
        <RibbonGroup w={139} pad={14} label="Clipboard" launcher>
          <Big w={54} drop={2} icon={<PasteIcon />} top="Paste" chevron />
          <Rows $tight>
            <Row $h={32}><Slot $w={32}><CutIcon /></Slot></Row>
            <Row $h={32}><Slot $w={32}><CopyIcon /></Slot><Slot $w={26}><Chevron /></Slot></Row>
            <Row $h={32}><Slot $w={32}><PainterIcon /></Slot></Row>
          </Rows>
        </RibbonGroup>

        <RibbonGroup w={292} pad={10} label="Font" launcher>
          <Rows>
            <Row>
              <Select $w={142}>Arial<Chevron /></Select>
              <Select $w={63}>11<Chevron /></Select>
              <Slot $w={29}><FontSizeIcon up /></Slot>
              <Slot $w={38}><FontSizeIcon /></Slot>
            </Row>
            <Row>
              <Slot $w={30}><Glyph $bold $size={16.5}>B</Glyph></Slot>
              <Slot $w={34}><Glyph $serif $italic $size={19}>I</Glyph></Slot>
              <Slot $w={28}><Glyph $under $size={15.5}>U</Glyph></Slot>
              <Slot $w={20}><Chevron /></Slot>
              <Slot $w={4}><Rule /></Slot>
              <Slot $w={31}><BordersIcon /></Slot>
              <Slot $w={17}><Chevron /></Slot>
              <Slot $w={9}><Rule /></Slot>
              <Slot $w={26}><BucketIcon /></Slot>
              <Slot $w={20}><Chevron /></Slot>
              <Slot $w={36}><FontColorIcon /></Slot>
              <Slot $w={10}><Chevron /></Slot>
            </Row>
          </Rows>
        </RibbonGroup>

        <RibbonGroup w={416} pad={9} label="Alignment" launcher>
          <Rows>
            <Row>
              <Slot $w={32}><Lines w={[18, 12, 18]} h={20} /></Slot>
              <Slot $w={32}><Lines w={[18, 12, 18]} align="center" /></Slot>
              <Slot $w={32}><Pressed><Lines w={[18, 12, 18]} align="center" /></Pressed></Slot>
              <Slot $w={2}><Rule /></Slot>
              <Slot $w={34}><OrientIcon /></Slot>
              <Slot $w={9}><Chevron /></Slot>
              <Slot $w={22}><Rule /></Slot>
              <Slot $w={13}>
                <Svg w={15} h={14}><path d="M.8 3.500 4 7 .8 10.500" stroke="#3a96dd" /><path d="M15 1H10q-3 .3-3 3t3 3ZM10 7v7M13 1v13" fill="#d6d6d6" strokeWidth="1.2" /></Svg>
              </Slot>
              <Slot $w={34}><Chevron /></Slot>
            </Row>
            <Row>
              <Slot $w={32}><Lines /></Slot>
              <Slot $w={32}><Lines align="center" /></Slot>
              <Slot $w={32}><Lines align="right" /></Slot>
              <Slot $w={2}><Rule /></Slot>
              <Slot $w={34}><IndentIcon out /></Slot>
              <Slot $w={30}><IndentIcon /></Slot>
            </Row>
          </Rows>
          <Slot $w={4}><Rule $h={78} /></Slot>
          <Rows>
            <Row><Slot $w={3} /><Slot $w={32}><WrapIcon /></Slot>Wrap Text</Row>
            <Row><Slot $w={3} /><Slot $w={32}><MergeIcon /></Slot><Label $w={122}>Merge &amp; Center</Label><Slot $w={20}><Chevron /></Slot></Row>
          </Rows>
        </RibbonGroup>

        <RibbonGroup w={200} pad={10} label="Number" launcher>
          <Rows>
            <Row><Select $w={180}>General<Chevron /></Select></Row>
            <Row>
              <Slot $w={30}><AccountingIcon /></Slot>
              <Slot $w={16}><Chevron /></Slot>
              <Slot $w={40}><Glyph $size={22}>%</Glyph></Slot>
              <Slot $w={24}><Svg w={10} h={16} stroke="none"><path d="M5 0q5 0 5 6-1 8-7 10-1-1 0-2 3-1 3-4Q0 11 0 5 .5 0 5 0Z" fill="#cfcfcf" /></Svg></Slot>
              <Slot $w={11}><Rule /></Slot>
              <Slot $w={23}><DecimalIcon more /></Slot>
              <Slot $w={41}><DecimalIcon /></Slot>
            </Row>
          </Rows>
        </RibbonGroup>

        <RibbonGroup w={246} pad={8} label="Styles">
          <Big w={95} icon={<CondFormatIcon />} top="Conditional" bottom="Formatting" chevron />
          <Big w={74} icon={<FormatTableIcon />} top="Format as" bottom="Table" chevron />
          <Big w={58} icon={<CellStylesIcon />} top="Cell" bottom="Styles" chevron />
        </RibbonGroup>

        <RibbonGroup w={181} pad={10} label="Cells">
          <Big w={52} drop={2} icon={<InsertIcon />} top="Insert" chevron />
          <Big w={56} drop={2} icon={<DeleteIcon />} top="Delete" chevron />
          <Big w={52} icon={<FormatIcon />} top="Format" chevron />
        </RibbonGroup>

        <RibbonGroup w={197} pad={9} label="Editing">
          <Rows $tight>
            <Row $h={32}>
              <Slot $w={32}><Svg w={16} h={18}><path d="M15 3.500V.8H1L9 9l-8 8.200h14v-2.700" /></Svg></Slot>
              <Slot $w={26}><Chevron /></Slot>
            </Row>
            <Row $h={32}>
              <Slot $w={32}><Svg w={20} h={18}><path d="M.8.8h18.400v16.400H.8ZM1 3h18" /><path d="M10 5v9M6.500 10.500 10 14l3.500-3.500" stroke="#3a96dd" /></Svg></Slot>
              <Slot $w={10}><Chevron /></Slot>
            </Row>
            <Row $h={32}>
              <Slot $w={32}><Svg w={20} h={19} stroke="#c77ae8"><path d="m1 12 6 6.500L19 8l-6-7Z" /><path d="m1 12 5-5 7 6-6 5.500Z" fill="#a54fc9" /></Svg></Slot>
              <Slot $w={10}><Chevron /></Slot>
            </Row>
          </Rows>
          <Slot $w={2} />
          <Big w={58} icon={<SortIcon />} top="Sort &amp;" bottom="Filter" chevron />
          <Big w={60} icon={<FindIcon />} top="Find &amp;" bottom="Select" chevron />
        </RibbonGroup>

        <RibbonGroup w={78} label="Add-ins">
          <Big w={78} icon={<AddinsIcon />} top="Add-ins" />
        </RibbonGroup>
        <RibbonGroup w={75}>
          <Big w={75} icon={<CopilotIcon />} top="Copilot" />
        </RibbonGroup>
        <Collapse><Chevron w={12} sw={1.5} /></Collapse>
      </Ribbon>

      <FormulaBar>
        <Field $w={127}>F5<Chevron w={12} sw={1.3} /></Field>
        <Dots />
        <Field $w={107} $r={2}>
          <Svg w={16} h={15} stroke="#8a8a8a" strokeWidth="1.3"><path d="m1 1 14 13M15 1 1 14" /></Svg>
          <Svg w={20} h={14} stroke="#8a8a8a" strokeWidth="1.3"><path d="m1 7 6 6L19 1" /></Svg>
          <Glyph $serif $italic $size={22}>fx</Glyph>
          <Chevron w={12} sw={1.1} color="#bbb" />
        </Field>
        <FormulaInput $w={1636} $h={54}>
          <Svg w={12} h={7} strokeWidth="1.3"><path d="m1 6 5-5 5 5" /></Svg>
        </FormulaInput>
      </FormulaBar>

      <SheetArea>
        <Sheet>
          <Corner><Svg w={14} h={14} stroke="none"><path d="M14 0v14H0Z" fill="#7a7a7a" /></Svg></Corner>
          {[...'ABCDEFGHIJKLMNOP', ''].map((c, i) => (
            <ColHead key={c} style={{ gridColumn: i + 2 }} $active={c === 'F'}>{c}</ColHead>
          ))}
          {rowHeights.map((h, i) => (
            <RowHead
              key={i}
              style={{ gridRow: i + 2 }}
              $active={i === 3}
              $edge={i === 0 || i === 10 ? 'flex-end' : i === 27 ? 'flex-start' : null}
            >
              {i + 2}
            </RowHead>
          ))}
          <Selection />
          <Counter $col={4}>
            <ArabicHead $h={25}><span>عدد الأشهر التي لم يحقق فيها التارغت</span></ArabicHead>
            3
          </Counter>
          <Counter $col={6}>
            <ArabicHead $h={25}><span>عدد الأشهر التي حقق فيها التارغت</span></ArabicHead>
            1
          </Counter>
          <MonthTable>
            <ArabicHead $h={26} $center><span>نسبة تحقيق التارغت لكل شهر (%)</span></ArabicHead>
            {months.map(([name, v]) => (
              <MonthRow key={name}><span>{name}</span><span>{v}%</span></MonthRow>
            ))}
          </MonthTable>
        </Sheet>
        <VScroll>
          <Svg w={10} h={10} stroke="none"><path d="m5 0 5 9H0Z" fill="#9a9a9a" /></Svg>
          <VThumb />
          <Svg w={10} h={10} stroke="none"><path d="m5 9.500 5-9H0Z" fill="#9a9a9a" /></Svg>
        </VScroll>
        <ComboBox><span>Omar</span><ComboArrow /></ComboBox>
        <Chart />
      </SheetArea>

      <SheetTabs>
        <Slot $w={71}><Svg w={7} h={12} stroke="#9a9a9a"><path d="M6.500.5 1 6l5.500 5.500" /></Svg></Slot>
        <Slot $w={10}><Svg w={7} h={12} stroke="#9a9a9a"><path d="M.5.5 6 6 .5 11.500" /></Svg></Slot>
        <Slot $w={59} />
        <Slot $w={91}><ArabicTab dir="rtl">للاداره ث</ArabicTab></Slot>
        <Slot $w={1}><Rule $h={24} /></Slot>
        <Slot $w={85}>Sheet3</Slot>
        <Slot $w={1}><Rule $h={24} /></Slot>
        <ActiveSheet><span>Sheet4</span></ActiveSheet>
        <Slot $w={1}><Rule $h={24} /></Slot>
        <Slot $w={117}><Svg w={14} h={14}><path d="M7 0v14M0 7h14" /></Svg></Slot>
        <Slot $w={623} />
        <Dots $h={38} />
        <HScroll>
          <Svg w={9} h={11} stroke="none"><path d="M9 0v11L0 5.500Z" fill="#9a9a9a" /></Svg>
          <HThumb />
          <Svg w={9} h={11} stroke="none"><path d="M0 0v11l9-5.500Z" fill="#9a9a9a" /></Svg>
        </HScroll>
      </SheetTabs>

      <StatusBar>
        <Label $w={61} $size={12.6}>Ready</Label>
        <Slot $w={20}><Svg w={18} h={16} strokeWidth="1.4"><path d="M7 15H.8V.8h16.400V5M1 3.500h16M3 7h4M3 10.500h3" /><circle cx="12.500" cy="10.500" r="4.700" /><circle cx="12.500" cy="10.500" r="1.500" /></Svg></Slot>
        <Slot $w={20} />
        <Slot $w={20}><Svg w={18} h={18} strokeWidth="1.4"><circle cx="9" cy="2.500" r="2" /><path d="M8 16.500H4l2-6V7L1 5.500V3.500L6 5h6l5-1.500v2L12 7v3M10 10l7 7M17 10l-7 7" /></Svg></Slot>
        <Slot $w={3} />
        <b>Accessibility: Investigate</b>
        <Slot $w={152} />
        <ViewButton $w={50} $active><Svg w={17} h={17} strokeWidth="1.6"><path d="M.8.8h15.400v15.400H.8ZM6 0v17M11 0v17M0 6h17M0 11h17" /></Svg></ViewButton>
        <ViewButton $w={50}><Svg w={17} h={17}><path d="M.8.8h15.400v15.400H.8ZM4 3.500h9v10H4ZM6 6h5M6 8.500h5M6 11h5" /></Svg></ViewButton>
        <ViewButton $w={50}><Svg w={17} h={17}><path d="M.8.8h15.400v15.400H.8ZM1 10.500h10V1M6 1v9" /></Svg></ViewButton>
        <Slot $w={23}><Svg w={10} h={2}><path d="M0 1h10" /></Svg></Slot>
        <ZoomTrack />
        <Slot $w={22}><Svg w={10} h={10}><path d="M0 5h10M5 0v10" /></Svg></Slot>
        <Slot $w={10} />
        <Label $w={40} $size={12}>100%</Label>
      </StatusBar>

      <Taskbar>
        <Slot $w={60}><Svg w={20} h={20} stroke="none"><path d="m0 2.800 8.500-1.200v8H0ZM9.300 1.500 20 0v9.600H9.300ZM0 10.400h8.500v8L0 17.200ZM9.300 10.400H20V20L9.300 18.500Z" fill="#fff" /></Svg></Slot>
        <TaskSearch>
          <Svg w={20} h={20} stroke="#222"><circle cx="12.500" cy="7.500" r="6.800" /><path d="M7.500 12.500.8 19.500" /></Svg>
          Type here to search
          <Svg w={76} h={30} stroke="none">
            <path d="M30 0q2 11 14 14.500Q32 18 30 29 28 18 16 14.500 28 11 30 0Z" fill="#fbb917" stroke="#fbb917" strokeWidth="1.500" strokeLinejoin="round" />
            <path d="M58 12q1 6 7 7.500-6 1.500-7 7-1-5.500-7-7 6-1.500 7-7.500Z" fill="#fbb917" />
            <path d="M5 20q1 4 5 4.500-4 2-4 5.500-2-3-6-3.500 5-2 5-6.500Z" fill="#0a8bf0" />
            <circle cx="50" cy="2.500" r="2.500" fill="#e0522a" /><circle cx="73" cy="27" r="2.800" fill="#7dc242" />
          </Svg>
        </TaskSearch>
        {taskApps.map((app, i) => <AppButton key={i} $open={app.open} $active={app.active}>{app.icon}</AppButton>)}
        <Slot $w={178} />
        <Slot $w={29}>
          <Svg w={28} h={26} stroke="none"><circle cx="12.500" cy="12.500" r="12.500" fill="#f7941e" /><path d="M14 20q-4 0-4-3.500t4-3.500q1-4 5-3.500 4 .5 4 4 5 0 5 3.500 0 3-4 3Z" fill="#8fd0f5" /></Svg>
        </Slot>
        <Slot $w={10} />
        <Slot $w={47} $start><Label $w={40} $size={16.4}>19°C</Label></Slot>
        <Slot $w={94}><ArabicTab dir="rtl" $size={17.8}>مشمس غالبًا</ArabicTab></Slot>
        <Slot $w={23} />
        <Slot $w={30}><Svg w={16} h={9} stroke="#fff"><path d="m1 8.500 7-7 7 7" /></Svg></Slot>
        <Slot $w={30}><Svg w={15} h={20} stroke="#fff" strokeWidth="1.3"><rect width="15" height="20" rx="7.500" fill="#0a84e8" stroke="none" /><path d="m4 7 7 6-3.500 3V4L11 7l-7 6" /></Svg></Slot>
        <Slot $w={30}><Svg w={15} h={18} stroke="#fff" strokeWidth="1.3"><path d="M3 2.500Q7 0 11 2.500M3 15.500q4 2.500 8 0" /><rect x="1.500" y="5" width="9" height="8" rx="1.500" /><path d="m10.500 8 3.500-2v6l-3.500-2" /></Svg></Slot>
        <Slot $w={30}><Svg w={20} h={18} stroke="#fff" strokeWidth="1.2"><path d="M1 6.500h3L8 3v12l-4-3.500H1ZM11 6q2 3 0 6M14 4q3.500 5 0 10M17 2q5 7 0 14" /></Svg></Slot>
        <Slot $w={31}><Svg w={16} h={16} stroke="#ddd" strokeWidth="1.2"><path d="M1 15Q1 1 15 1M5 15Q5 5 15 5M9 15q0-6 6-6" /><circle cx="14" cy="14" r="1.500" fill="#ddd" /></Svg></Slot>
        <Slot $w={30}><Svg w={20} h={16} stroke="#fff" strokeWidth="1.3"><path d="M5 5h12.500v9H4V9M18 8h1.500v3H18M1 1v3M5 1v3M.5 4h5q0 3-2.500 3T.5 4Z" /><path d="M6.500 7h6v5h-6Z" fill="#fff" /></Svg></Slot>
        <Slot $w={5} />
        <TrayText $w={34} $size={13.9}>ENG<br />US</TrayText>
        <Slot $w={8} />
        <TrayText $w={74}>11:41 ص<br />٢٠٢٦/٠٣/٠٧</TrayText>
        <Slot $w={56}><Svg w={20} h={20} stroke="#fff" strokeWidth="1.3"><path d="M.7.7h18.600v15.600H13L10 19.500 7 16.300H.7Z" /></Svg></Slot>
        <ShowDesktop />
      </Taskbar>

      <ActivateNotice>
        Activate Windows
        <p>Go to Settings to activate Windows.</p>
      </ActivateNotice>
      <Watermark>
        <svg width="230" height="132" fill="#9c9c9c" stroke="#9c9c9c" strokeLinejoin="round">
          <text x="229" y="63" fontSize="74" fontWeight="700" strokeWidth="3" fontFamily="DejaVu Sans, sans-serif" direction="rtl" textLength="228" lengthAdjust="spacingAndGlyphs">مستقل</text>
          <text x="0" y="105" fontSize="39" fontFamily="Liberation Sans, sans-serif" textLength="230" lengthAdjust="spacingAndGlyphs">mostaql.com</text>
        </svg>
      </Watermark>
    </Page>
  );
};

export default App;
